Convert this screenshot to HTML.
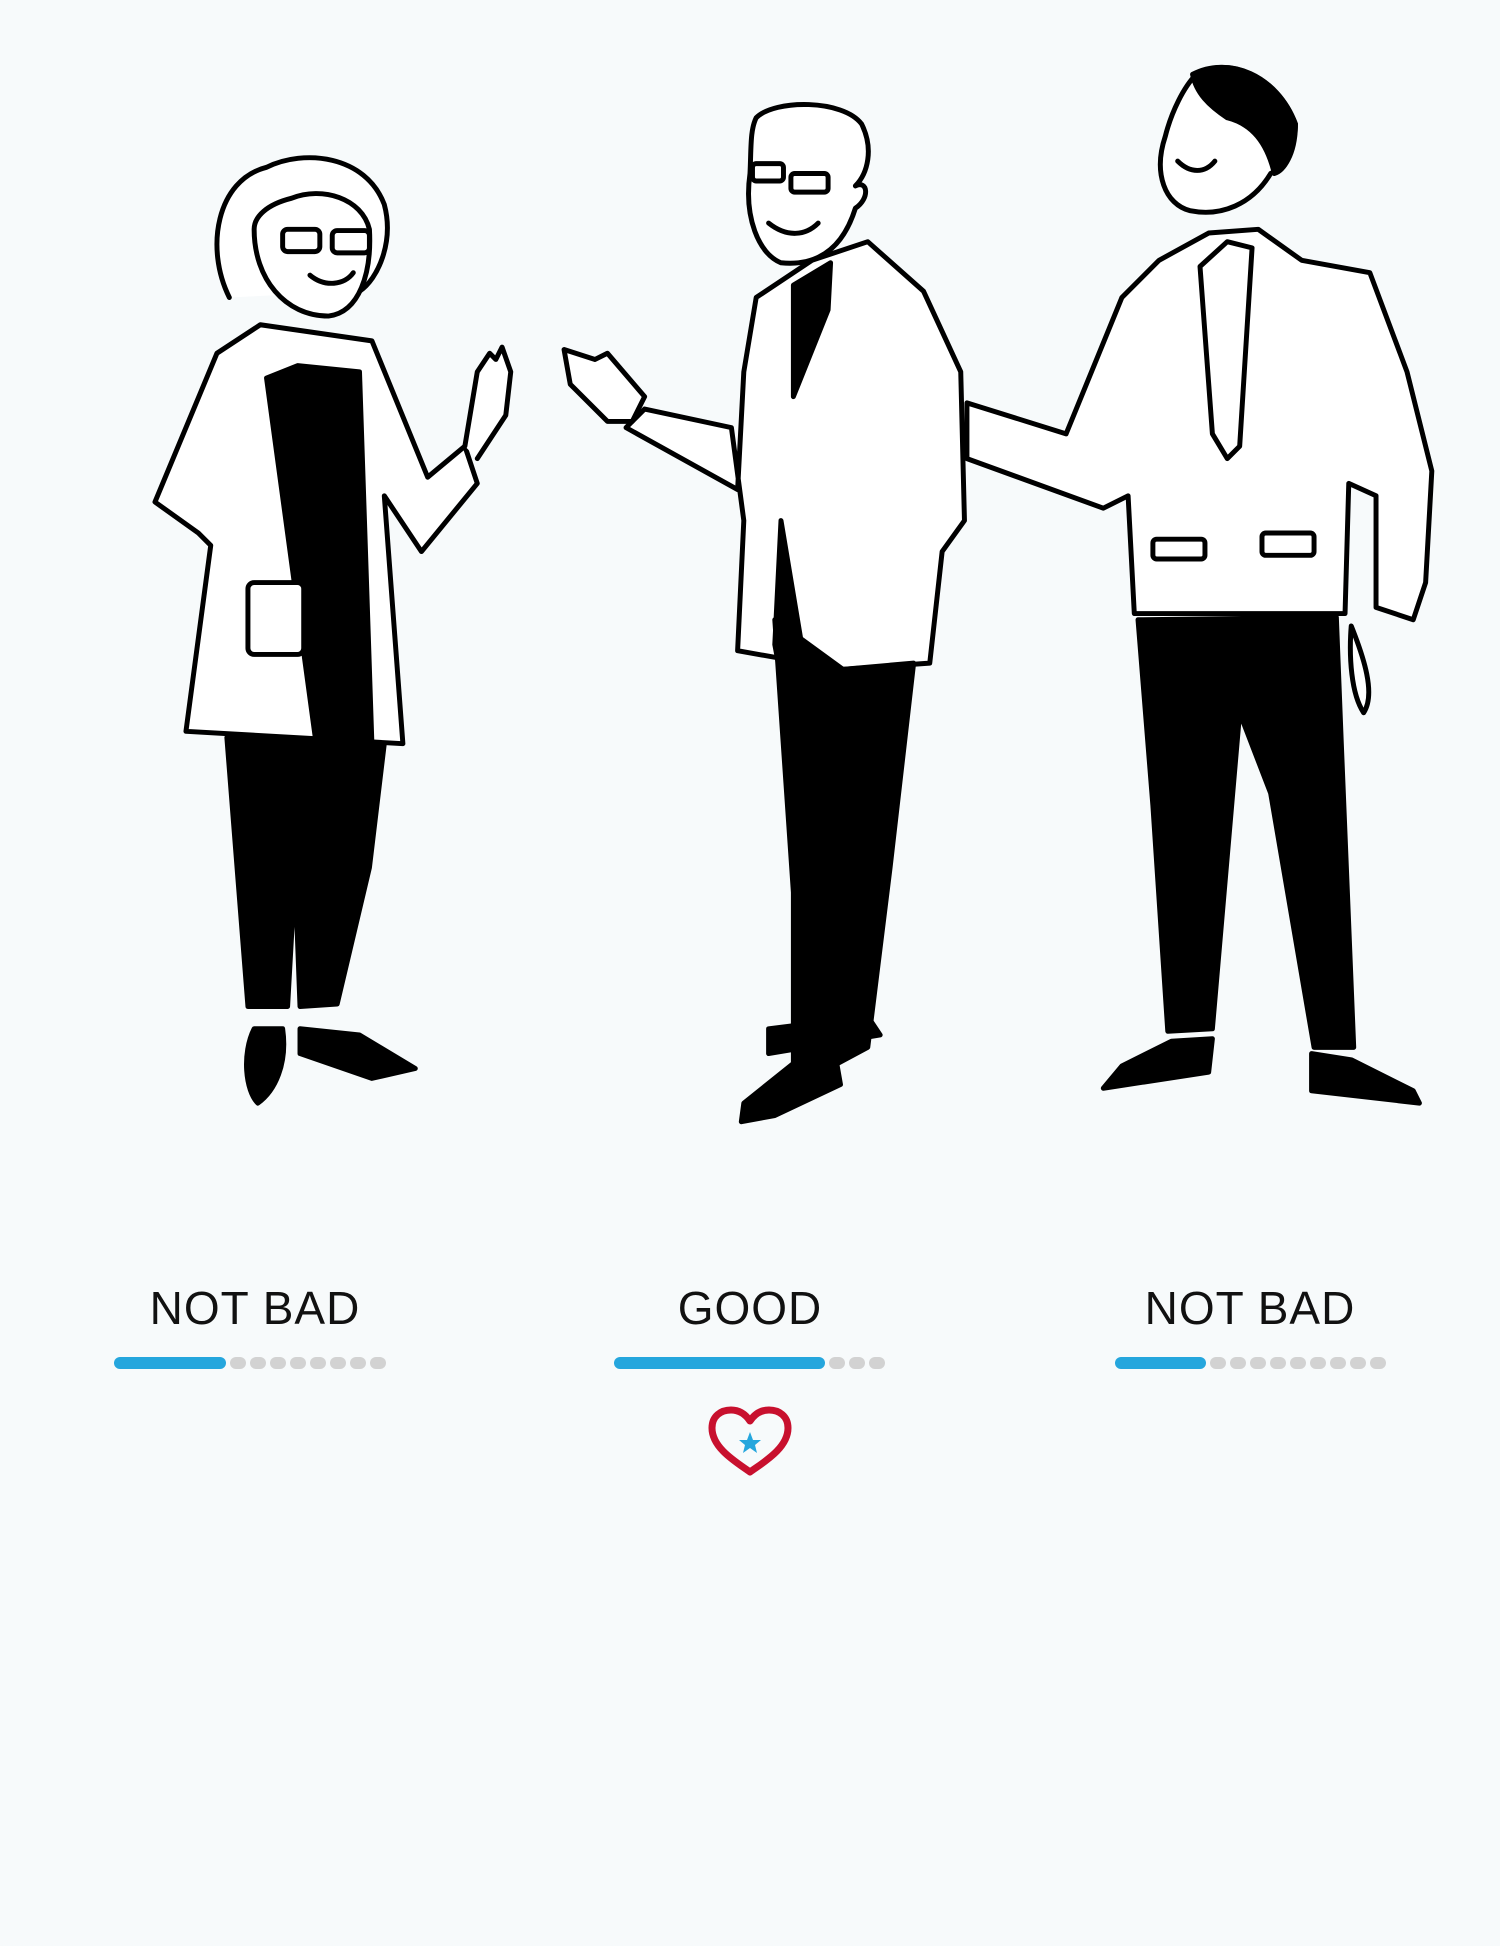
<!DOCTYPE html>
<html><head><style>
html,body{margin:0;padding:0;background:#f7fafb;}
body{width:1500px;height:1946px;position:relative;overflow:hidden;font-family:"Liberation Sans","DejaVu Sans",sans-serif;}
svg.art{position:absolute;left:0;top:0;width:1500px;height:1946px;}
.lbl{position:absolute;top:1283px;font-size:46px;letter-spacing:1px;color:#111;text-align:center;width:400px;line-height:50px;}
.bar{position:absolute;top:1357px;height:12px;display:flex;gap:4px;}
.bar .b{height:12px;border-radius:6px;background:#25a6dd;}
.bar .d{width:16px;height:12px;border-radius:6px;background:#d2d2d2;}
</style></head><body>
<svg class="art" viewBox="0 0 1210 1570" preserveAspectRatio="none" fill="none" stroke="#000" stroke-width="4" stroke-linejoin="round" stroke-linecap="round">
<!-- Woman -->
<path d="M185 240 C165 200 175 145 215 135 C245 120 295 125 310 165 C318 195 305 225 290 235" fill="#fff"/>
<path d="M205 185 C205 225 230 255 265 255 C290 252 300 220 298 185 C292 160 260 150 235 160 C215 165 205 175 205 185Z" fill="#fff"/>
<rect x="228" y="185" width="30" height="18" rx="4"/><rect x="268" y="186" width="30" height="18" rx="4"/>
<path d="M250 222 C262 232 278 230 285 220"/>
<path d="M175 285 L210 262 L300 275 L345 385 L375 360 L385 390 L340 445 L310 400 L325 600 L150 590 L170 440 L160 430 L125 405 Z" fill="#fff"/>
<path d="M215 305 L240 295 L290 300 L300 600 L255 600 Z" fill="#000"/>
<path d="M375 360 L385 300 L395 285 L400 290 L405 280 L412 300 L408 335 L385 370" fill="#fff"/>
<rect x="200" y="470" width="45" height="58" rx="5" fill="#fff"/>
<path d="M183 595 L310 600 L298 700 L272 810 L242 812 L238 705 L232 812 L200 812 Z" fill="#000"/>
<path d="M205 830 C195 850 198 880 208 890 C222 880 232 858 228 830 Z" fill="#000"/>
<path d="M242 830 L290 835 L335 862 L300 870 L242 850 Z" fill="#000"/>
<!-- Middle man -->
<path d="M610 95 C625 80 680 80 695 100 C705 120 700 140 690 150 C700 145 702 160 690 168 C680 200 660 215 630 212 C612 205 600 175 605 140 C606 120 605 105 610 95Z" fill="#fff"/>
<rect x="607" y="132" width="25" height="14" rx="3"/><rect x="638" y="140" width="30" height="15" rx="3"/>
<path d="M620 180 C635 192 650 190 660 180"/>
<path d="M610 240 L655 210 L700 195 L745 235 L775 300 L778 420 L760 445 L750 535 L680 540 L595 525 L600 420 L590 345 L520 330 L505 345 L595 395 L600 300 Z" fill="#fff"/>
<path d="M640 230 L670 212 L668 250 L640 320 Z" fill="#000"/>
<path d="M630 420 L625 520 L640 600 L650 540 Z" fill="#000"/>
<path d="M455 282 L480 290 L490 285 L520 320 L510 340 L490 340 L460 310 Z" fill="#fff"/>
<path d="M625 500 L680 540 L737 535 L718 700 L700 845 L672 860 L640 860 L640 720 Z" fill="#000"/>
<path d="M620 830 L700 820 L710 835 L620 850 Z" fill="#000"/>
<path d="M640 858 L675 858 L678 875 L625 900 L598 905 L600 890 Z" fill="#000"/>
<!-- Right man -->
<path d="M965 60 C990 45 1030 60 1045 100 C1045 120 1035 135 1025 140 C1010 165 985 175 960 170 C940 165 930 140 940 110 C945 90 955 70 965 60Z" fill="#fff"/>
<path d="M962 60 C990 45 1030 60 1045 100 C1045 125 1035 138 1028 140 C1022 115 1010 100 990 95 C975 85 965 75 962 60Z" fill="#000"/>
<path d="M950 130 C960 140 972 140 980 130"/>
<path d="M935 210 L975 188 L1015 185 L1050 210 L1105 220 L1135 300 L1155 380 L1150 470 L1140 500 L1110 490 L1110 400 L1088 390 L1085 495 L915 495 L910 400 L890 410 L780 370 L780 325 L860 350 L905 240 Z" fill="#fff"/>
<path d="M968 215 L990 195 L1010 200 L1000 360 L990 370 L978 350 Z" fill="#fff"/>
<rect x="930" y="435" width="42" height="16" rx="3"/><rect x="1018" y="430" width="42" height="18" rx="3"/>
<path d="M1090 505 C1100 530 1110 560 1100 575 C1090 560 1088 530 1090 505Z" fill="#fff"/>
<path d="M918 500 L1078 498 L1082 600 L1092 845 L1060 845 L1025 640 L1000 575 L978 830 L942 832 L930 650 Z" fill="#000"/>
<path d="M945 840 L978 838 L975 865 L890 878 L905 860 Z" fill="#000"/>
<path d="M1058 850 L1090 855 L1140 880 L1145 890 L1058 880 Z" fill="#000"/>
</svg>
<div class="lbl" style="left:55px">NOT BAD</div>
<div class="lbl" style="left:550px">GOOD</div>
<div class="lbl" style="left:1050px">NOT BAD</div>
<div class="bar" style="left:114px"><div class="b" style="width:112px"></div><div class="d"></div><div class="d"></div><div class="d"></div><div class="d"></div><div class="d"></div><div class="d"></div><div class="d"></div><div class="d"></div></div>
<div class="bar" style="left:614px"><div class="b" style="width:211px"></div><div class="d"></div><div class="d"></div><div class="d"></div></div>
<div class="bar" style="left:1115px"><div class="b" style="width:91px"></div><div class="d"></div><div class="d"></div><div class="d"></div><div class="d"></div><div class="d"></div><div class="d"></div><div class="d"></div><div class="d"></div><div class="d"></div></div>
<svg style="position:absolute;left:706px;top:1404px" width="88" height="74" viewBox="0 0 88 74">
<path d="M44 68 C30 58 6 44 6 24 C6 12 15 6 25 6 C34 6 40 11 44 17 C48 11 54 6 63 6 C73 6 82 12 82 24 C82 44 58 58 44 68Z" fill="none" stroke="#c8102e" stroke-width="7" stroke-linejoin="round"/>
<path d="M44 28 L47 36 L55 36 L49 41 L51 49 L44 44 L37 49 L39 41 L33 36 L41 36Z" fill="#25a6dd"/>
</svg>
</body></html>
